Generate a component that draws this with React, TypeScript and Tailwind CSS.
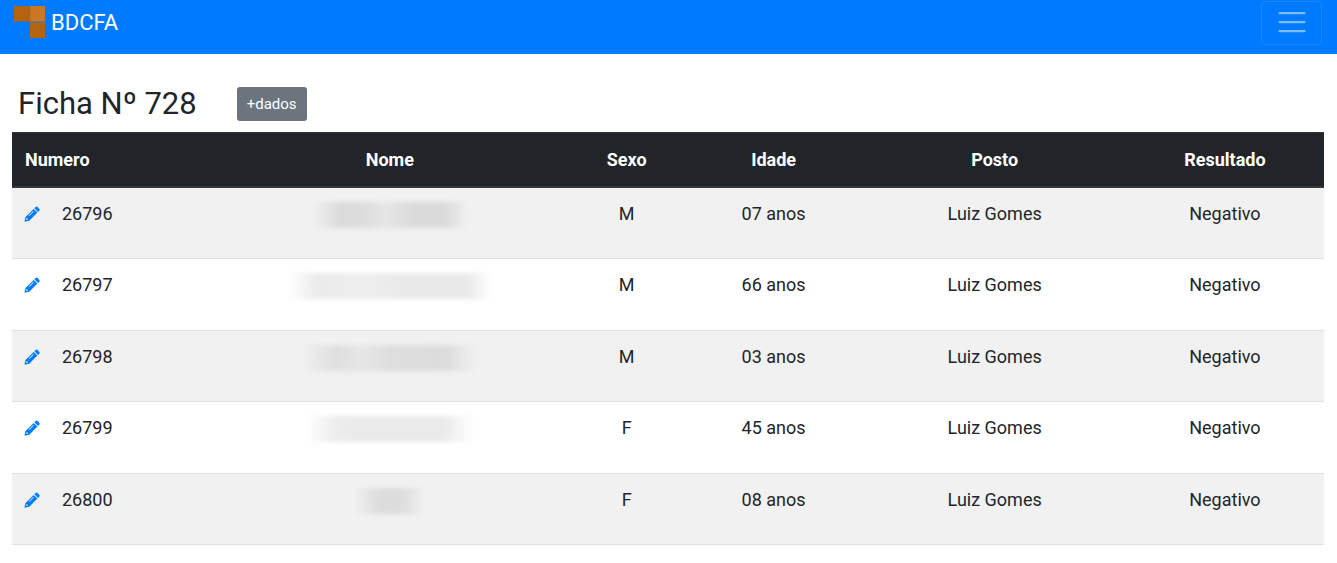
import React from 'react';

interface Exame {
  numero: string;
  nomeClass: string;
  sexo: 'M' | 'F';
  idade: string;
  posto: string;
  resultado: string;
}

const exames: Exame[] = [
  {
    numero: '26796',
    nomeClass:
      'w-[154px] bg-[linear-gradient(90deg,transparent,#dadada_18%,#dddddd_35%,#e6e6e6_47%,#dadada_65%,#dadada_86%,transparent)]',
    sexo: 'M',
    idade: '07 anos',
    posto: 'Luiz Gomes',
    resultado: 'Negativo',
  },
  {
    numero: '26797',
    nomeClass:
      'w-[202px] bg-[linear-gradient(90deg,transparent,#ebebeb_14%,#eeeeee_40%,#e9e9e9_56%,#e9e9e9_88%,transparent)]',
    sexo: 'M',
    idade: '66 anos',
    posto: 'Luiz Gomes',
    resultado: 'Negativo',
  },
  {
    numero: '26798',
    nomeClass:
      'w-[174px] bg-[linear-gradient(90deg,transparent,#dfdfdf_18%,#e6e6e6_34%,#dedede_50%,#dcdcdc_82%,transparent)]',
    sexo: 'M',
    idade: '03 anos',
    posto: 'Luiz Gomes',
    resultado: 'Negativo',
  },
  {
    numero: '26799',
    nomeClass:
      'w-[168px] bg-[linear-gradient(90deg,transparent,#ebebeb_20%,#eaeaea_50%,#eaeaea_82%,transparent)]',
    sexo: 'F',
    idade: '45 anos',
    posto: 'Luiz Gomes',
    resultado: 'Negativo',
  },
  {
    numero: '26800',
    nomeClass: 'w-[72px] bg-[linear-gradient(90deg,transparent,#dcdcdc_35%,#dcdcdc_65%,transparent)]',
    sexo: 'F',
    idade: '08 anos',
    posto: 'Luiz Gomes',
    resultado: 'Negativo',
  },
];

const Logo: React.FC = () => (
  <svg viewBox="0 0 32 32" className="h-8 w-8" aria-hidden="true">
    <rect x="0" y="0" width="15.5" height="15.5" fill="#b3640f" />
    <rect x="16" y="0" width="15" height="15.5" fill="#cb7722" />
    <rect x="16" y="16.5" width="15" height="15.5" fill="#b3640f" />
    <path d="M15.75 0v16h15.25" fill="none" stroke="#6f7668" strokeWidth="1" />
  </svg>
);

const Pencil: React.FC = () => (
  <svg viewBox="0 0 16 16" className="h-4 w-4" fill="currentColor" aria-hidden="true">
    <path
      fillRule="evenodd"
      d="M11.500 1.100a1.500 1.500 0 0 1 2.100 0l1.600 1.600a1.500 1.500 0 0 1 0 2.100L14.100 5.900 10.400 2.200zM9.700 2.900l3.700 3.700-8.100 8.100-3.900.9a.6.6 0 0 1-.8-.8l.9-3.900zM4.700 9.400l4.500-4.500.5.500-4.500 4.500zM2.400 12.200l-.5 1.900 1.900-.5v-1H2.800z"
    />
  </svg>
);

const Navbar: React.FC = () => (
  <nav className="flex h-[54px] items-start justify-between bg-[#007bff] pr-[15px] pl-3.5">
    <a href="#inicio" className="flex items-start gap-[5px] pt-1.5 text-[22px] leading-[34px] text-white">
      <Logo />
      BDCFA
    </a>
    <button
      type="button"
      aria-label="Abrir menu"
      className="mt-px flex h-11 w-[61px] items-center justify-center rounded-[5px] border border-white/10 text-white/50"
    >
      <svg viewBox="0 0 30 30" className="h-[34px] w-[34px]" aria-hidden="true">
        <path
          d="M4 6.200h22M4 14.200h22M4 22.200h22"
          stroke="currentColor"
          strokeWidth="2"
          strokeLinecap="round"
          strokeMiterlimit="10"
        />
      </svg>
    </button>
  </nav>
);

export default function App() {
  return (
    <div className="bg-white font-['Roboto',sans-serif] text-lg text-[#212529]">
      <Navbar />
      <main className="pt-8 pr-[13px] pl-3">
        <div className="flex items-center gap-10 pb-2.5 pl-1.5">
          <h1 className="text-[31px] leading-9">Ficha Nº 728</h1>
          <button
            type="button"
            className="h-[34px] rounded-[3px] bg-[#6c757d] px-2.5 text-[15px] leading-6 text-white"
          >
            +dados
          </button>
        </div>

        <table className="w-full table-fixed border-separate border-spacing-0 text-center">
          <colgroup>
            <col className="w-[15.1%]" />
            <col className="w-[27.4%]" />
            <col className="w-[8.7%]" />
            <col className="w-[13.7%]" />
            <col className="w-[20%]" />
            <col className="w-[15.1%]" />
          </colgroup>
          <thead>
            <tr className="h-14 bg-[#212529] text-white *:border-t *:border-b-2 *:border-[#32383e] *:font-bold">
              <th scope="col" className="pl-[13px] text-left">Numero</th>
              <th scope="col">Nome</th>
              <th scope="col">Sexo</th>
              <th scope="col">Idade</th>
              <th scope="col">Posto</th>
              <th scope="col">Resultado</th>
            </tr>
          </thead>
          <tbody>
            {exames.map((exame) => (
              <tr
                key={exame.numero}
                className="h-[71px] odd:bg-[#f1f1f1] even:h-[72px] *:border-b *:border-[#dee2e6] *:pt-3 *:align-top"
              >
                <td>
                  <div className="flex items-center gap-[22px] pl-3">
                    <a
                      href={`#editar-${exame.numero}`}
                      aria-label={`Editar ${exame.numero}`}
                      className="text-[#007bff]"
                    >
                      <Pencil />
                    </a>
                    {exame.numero}
                  </div>
                </td>
                <td>
                  {/* patient names stay hidden */}
                  <div
                    role="img"
                    aria-label="Nome oculto"
                    className={`mx-auto mt-0.5 h-[26px] blur-[2px] ${exame.nomeClass}`}
                  />
                </td>
                <td>{exame.sexo}</td>
                <td>{exame.idade}</td>
                <td>{exame.posto}</td>
                <td>{exame.resultado}</td>
              </tr>
            ))}
          </tbody>
        </table>
      </main>
    </div>
  );
}
